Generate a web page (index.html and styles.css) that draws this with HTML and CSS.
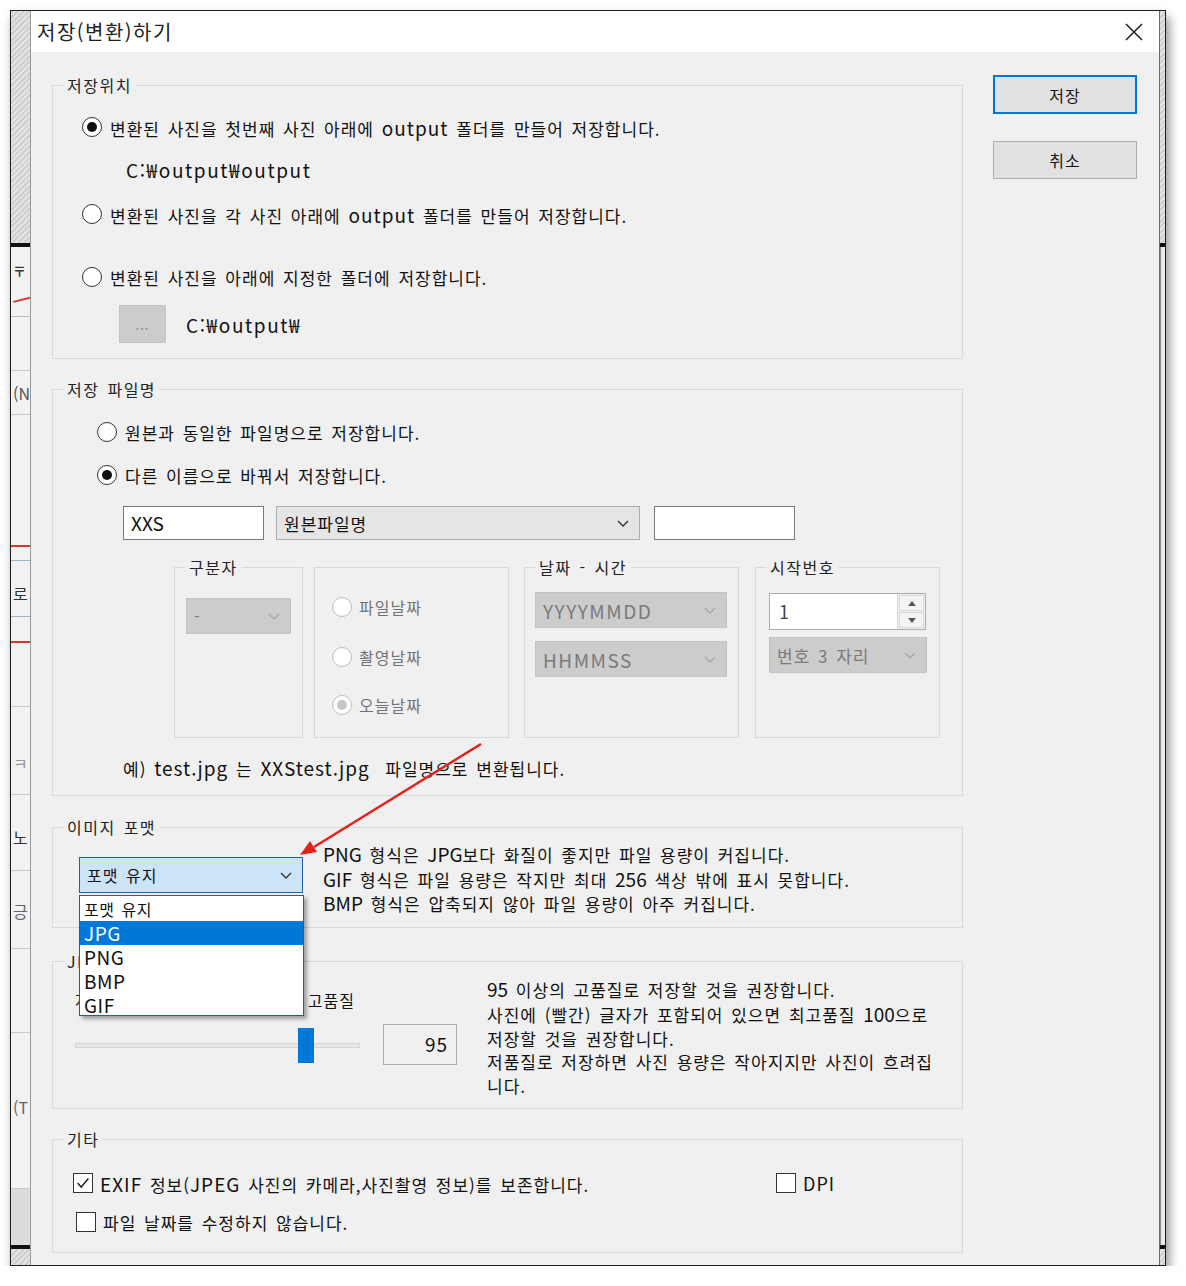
FILE: index.html
```html
<!DOCTYPE html>
<html lang="ko">
<head>
    <meta charset="UTF-8">
    <title>저장(변환)하기</title>
    <link rel="stylesheet" href="styles.css">
</head>
<body>

<div class="screen">
    <!-- window behind the dialog, left edge -->
    <div class="bg-left">
        <div class="hatch bg-top"></div>
        <div class="bg-bar"></div>
        <div class="bg-app">
            <div class="frag f1">〒</div>
            <div class="frag f2"><span class="redslant"></span></div>
            <div class="frag f3"></div>
            <div class="frag f4">(N</div>
            <div class="frag f5"></div>
            <div class="frag f6"></div>
            <div class="frag f7">로</div>
            <div class="frag f8"></div>
            <div class="frag f9"></div>
            <div class="frag f10 faint">ㅋ</div>
            <div class="frag f11">노</div>
            <div class="frag f12">긍</div>
            <div class="frag f13"></div>
            <div class="frag f14">(T</div>
            <div class="frag f15"></div>
        </div>
        <div class="bg-bar"></div>
        <div class="hatch bg-end"></div>
    </div>

    <div class="dialog">
        <div class="titlebar">
            <span class="title">저장(변환)하기</span>
            <svg class="close" width="18" height="18" viewBox="0 0 18 18"><path d="M1 1L17 17M17 1L1 17"/></svg>
        </div>

        <div class="dlg-body">
            <div class="main">

                <fieldset class="grp g-loc">
                    <legend>저장위치</legend>
                    <div class="inner">
                        <div class="row"><span class="radio on"></span><span>변환된 사진을 첫번째 사진 아래에 <span class="lat">output</span> 폴더를 만들어 저장합니다.</span></div>
                        <div class="row path">C:₩output₩output</div>
                        <div class="row r2"><span class="radio"></span><span>변환된 사진을 각 사진 아래에 <span class="lat">output</span> 폴더를 만들어 저장합니다.</span></div>
                        <div class="row r3"><span class="radio"></span><span>변환된 사진을 아래에 지정한 폴더에 저장합니다.</span></div>
                        <div class="row browse">
                            <span class="dots">...</span>
                            <span class="folder">C:₩output₩</span>
                        </div>
                    </div>
                </fieldset>

                <fieldset class="grp g-name">
                    <legend>저장 파일명</legend>
                    <div class="inner">
                        <div class="row"><span class="radio"></span><span>원본과 동일한 파일명으로 저장합니다.</span></div>
                        <div class="row r2"><span class="radio on"></span><span>다른 이름으로 바꿔서 저장합니다.</span></div>
                        <div class="name-row">
                            <span class="textbox">XXS</span>
                            <span class="combo">원본파일명
                                <svg class="chev" viewBox="0 0 12 7"><polyline points="1,1 6,6 11,1"/></svg>
                            </span>
                            <span class="textbox tb2"></span>
                        </div>
                        <div class="subs">
                            <fieldset class="grp sub sub1">
                                <legend>구분자</legend>
                                <div class="sub-inner">
                                    <span class="combo dis sep">-
                                        <svg class="chev" viewBox="0 0 12 7"><polyline points="1,1 6,6 11,1"/></svg>
                                    </span>
                                </div>
                            </fieldset>
                            <fieldset class="grp sub sub2">
                                <div class="sub-inner">
                                    <div class="drow"><span class="radio dis"></span>파일날짜</div>
                                    <div class="drow d2"><span class="radio dis"></span>촬영날짜</div>
                                    <div class="drow d3"><span class="radio dis on"></span>오늘날짜</div>
                                </div>
                            </fieldset>
                            <fieldset class="grp sub sub3">
                                <legend>날짜 - 시간</legend>
                                <div class="sub-inner">
                                    <span class="combo dis wide">YYYYMMDD
                                        <svg class="chev" viewBox="0 0 12 7"><polyline points="1,1 6,6 11,1"/></svg>
                                    </span>
                                    <span class="combo dis wide second">HHMMSS
                                        <svg class="chev" viewBox="0 0 12 7"><polyline points="1,1 6,6 11,1"/></svg>
                                    </span>
                                </div>
                            </fieldset>
                            <fieldset class="grp sub sub4">
                                <legend>시작번호</legend>
                                <div class="sub-inner">
                                    <div class="spin">
                                        <span class="spin-val">1</span>
                                        <span class="spin-btns">
                                            <span class="sb"><svg viewBox="0 0 8 5"><polygon points="0,5 4,0 8,5"/></svg></span>
                                            <span class="sb"><svg viewBox="0 0 8 5"><polygon points="0,0 8,0 4,5"/></svg></span>
                                        </span>
                                    </div>
                                    <span class="combo dis digits">번호 3 자리
                                        <svg class="chev" viewBox="0 0 12 7"><polyline points="1,1 6,6 11,1"/></svg>
                                    </span>
                                </div>
                            </fieldset>
                        </div>
                        <div class="row example"><span>예) <span class="lat">test.jpg</span> 는 <span class="lat">XXStest.jpg</span>  파일명으로 변환됩니다.</span></div>
                    </div>
                </fieldset>

                <fieldset class="grp g-fmt">
                    <legend>이미지 포맷</legend>
                    <div class="inner">
                        <span class="combo fmt">포맷 유지
                            <svg class="chev" viewBox="0 0 12 7"><polyline points="1,1 6,6 11,1"/></svg>
                        </span>
                        <div class="fmt-info">
                            <span class="lat">PNG</span> 형식은 <span class="lat">JPG</span>보다 화질이 좋지만 파일 용량이 커집니다.<br>
                            <span class="lat">GIF</span> 형식은 파일 용량은 작지만 최대 <span class="lat">256</span> 색상 밖에 표시 못합니다.<br>
                            <span class="lat">BMP</span> 형식은 압축되지 않아 파일 용량이 아주 커집니다.
                        </div>
                    </div>
                </fieldset>

                <fieldset class="grp g-jpg">
                    <legend>JPG 품질</legend>
                    <div class="inner">
                        <div class="q-left">
                            <div class="q-labels"><span>저품질</span><span>고품질</span></div>
                            <div class="slider">
                                <div class="track"></div>
                                <span class="thumb"></span>
                            </div>
                        </div>
                        <div class="q-box">95</div>
                        <div class="q-info">
                            <span class="lat">95</span> 이상의 고품질로 저장할 것을 권장합니다.<br>
                            사진에 (빨간) 글자가 포함되어 있으면 최고품질 <span class="lat">100</span>으로<br>
                            저장할 것을 권장합니다.<br>
                            저품질로 저장하면 사진 용량은 작아지지만 사진이 흐려집<br>
                            니다.
                        </div>
                    </div>
                </fieldset>

                <fieldset class="grp g-etc">
                    <legend>기타</legend>
                    <div class="inner">
                        <div class="chk-row">
                            <div class="chk-label exif">
                                <span class="chk"><svg viewBox="0 0 20 20"><polyline points="4,10 8,14.5 16,5"/></svg></span>
                                <span><span class="lat">EXIF</span> 정보(<span class="lat">JPEG</span> 사진의 카메라,사진촬영 정보)를 보존합니다.</span>
                            </div>
                            <div class="chk-label dpi"><span class="chk"></span><span>DPI</span></div>
                        </div>
                        <div class="chk-row second">
                            <div class="chk-label"><span class="chk"></span><span>파일 날짜를 수정하지 않습니다.</span></div>
                        </div>
                    </div>
                </fieldset>

            </div>

            <div class="side">
                <button class="btn btn-default">저장</button>
                <button class="btn btn-cancel">취소</button>
            </div>

            <!-- opened drop-down list of the format combo -->
            <ul class="droplist">
                <li>포맷 유지</li>
                <li class="sel lat">JPG</li>
                <li class="lat">PNG</li>
                <li class="lat">BMP</li>
                <li class="lat">GIF</li>
            </ul>

            <!-- red annotation arrow -->
            <svg class="arrow" width="1128" height="1213" viewBox="0 0 1128 1213">
                <line x1="450" y1="692" x2="283" y2="795"/>
                <polygon points="269,803 286,800 279,789"/>
            </svg>
        </div>
    </div>

    <div class="bg-right">
        <div class="hatch rt-top"></div>
        <div class="bg-bar"></div>
        <div class="rt-mid"></div>
        <div class="bg-bar"></div>
        <div class="hatch rt-end"></div>
    </div>
</div>

</body>
</html>
```

FILE: styles.css
```css
body { margin: 0; background: #fff; font-family: "Noto Sans CJK KR", "Noto Sans", sans-serif; color: #111; letter-spacing: 1px; word-spacing: 2px; }

.screen {
    display: flex; width: 1156px; height: 1256px; margin: 10px 0 0 10px;
    border: 1px solid #1e1e1e; box-sizing: border-box;
    box-shadow: 3px 7px 10px rgba(0,0,0,.45);
}

/* background window pieces */
.hatch { background: repeating-linear-gradient(135deg, #cfcfcf 0 2px, #e4e4e4 2px 4px); }
.bg-left { width: 19px; display: flex; flex-direction: column; overflow: hidden; letter-spacing: 0; }
.bg-top { height: 232px; flex: none; }
.bg-bar { height: 4px; background: #111; flex: none; }
.bg-app { flex: 1; background: #f2f2f2; display: flex; flex-direction: column; overflow: hidden; }
.bg-end { height: 16px; flex: none; }
.frag { flex: none; font-size: 16px; line-height: 20px; color: #333; padding-left: 2px; white-space: nowrap; border-bottom: 1px solid #c9c9c9; box-sizing: border-box; }
.faint { color: #999; }
.f1 { height: 36px; padding-top: 14px; font-size: 13px; font-weight: bold; border: 0; }
.f2 { height: 34px; border-color: #bdbdbd; }
.redslant { display: block; width: 24px; height: 2px; margin-top: 15px; background: #d33; transform: rotate(-14deg); }
.f3 { height: 54px; }
.f4 { height: 44px; padding-top: 12px; color: #555; }
.f5 { height: 132px; border-bottom: 2px solid #d33; }
.f6 { height: 14px; border-color: #9bb3d6; }
.f7 { height: 56px; padding-top: 22px; border-color: #9bb3d6; }
.f8 { height: 26px; border-bottom: 2px solid #d33; }
.f9 { height: 64px; }
.f10 { height: 88px; padding-top: 46px; }
.f11 { height: 76px; padding-top: 32px; }
.f12 { height: 78px; padding-top: 30px; color: #666; }
.f13 { height: 84px; }
.f14 { height: 156px; padding-top: 64px; color: #666; }
.f15 { flex: 1; background: #dcdcdc; border: 0; }

.bg-right { width: 5px; display: flex; flex-direction: column; }
.rt-top { height: 232px; }
.rt-mid { flex: 1; background: #e9e9e9; border-left: 1px solid #888; }
.rt-end { height: 16px; }

/* dialog */
.dialog {
    width: 1130px; flex: none; box-sizing: border-box; background: #f0f0f0;
    border-left: 1px solid #9a9a9a; border-right: 1px solid #6a6a6a;
    display: flex; flex-direction: column;
}
.titlebar { height: 41px; flex: none; background: #fff; display: flex; align-items: center; justify-content: space-between; padding: 0 16px 0 6px; }
.title { font-size: 20px; color: #222; letter-spacing: 1.5px; }
.close path { stroke: #222; stroke-width: 1.6; fill: none; }

.dlg-body { position: relative; flex: 1; display: flex; padding: 23px 0 0 21px; }
.main { width: 911px; flex: none; }
.side { margin-left: 30px; width: 144px; display: flex; flex-direction: column; }

.lat { font-size: 19px; }

.grp { border: 1px solid #d9d9d9; margin: 0; padding: 0; min-width: 0; }
.grp legend { margin-left: 10px; padding: 0 4px; font-size: 16px; line-height: 20px; height: 20px; color: #222; letter-spacing: 1.5px; }
.g-name { margin-top: 20px; }
.g-fmt { margin-top: 21px; }
.g-jpg { margin-top: 23px; }
.g-etc { margin-top: 20px; }

.row { display: flex; align-items: center; height: 34px; font-size: 17px; white-space: pre; }
.row .lat { font-size: 19px; }

.radio { position: relative; flex: none; width: 20px; height: 20px; margin-right: 8px; border: 1px solid #333; border-radius: 50%; background: #fff; box-sizing: border-box; }
.radio.on::after { content: ""; position: absolute; inset: 4px; border-radius: 50%; background: #111; }
.radio.dis { border-color: #bcbcbc; }
.radio.dis.on::after { background: #c6c6c6; }

/* 저장위치 */
.g-loc .inner { padding: 15px 0 15px 29px; }
.g-loc .path { margin-top: 8px; padding-left: 44px; font-size: 19px; letter-spacing: 1.6px; }
.g-loc .r2 { margin-top: 11px; }
.g-loc .r3 { margin-top: 29px; }
.browse { margin-top: 11px; height: 38px; }
.dots { width: 47px; height: 38px; margin-left: 37px; box-sizing: border-box; background: #cccccc; border: 1px solid #c4c4c4; color: #888; font-size: 13px; display: flex; align-items: center; justify-content: center; }
.folder { margin-left: 20px; font-size: 19px; letter-spacing: 1.6px; }

/* 저장 파일명 */
.g-name .inner { padding: 16px 0 13px 44px; }
.g-name .r2 { margin-top: 9px; }
.name-row { display: flex; margin: 14px 0 0 26px; }
.textbox { width: 141px; height: 34px; box-sizing: border-box; background: #fff; border: 1px solid #7a7a7a; padding-left: 7px; font-size: 19px; line-height: 32px; letter-spacing: 0; }
.tb2 { margin-left: 14px; }
.combo { position: relative; display: flex; align-items: center; box-sizing: border-box; height: 34px; padding-left: 7px; background: #e5e5e5; border: 1px solid #adadad; font-size: 17px; }
.name-row .combo { width: 364px; margin-left: 12px; }
.chev { position: absolute; right: 10px; top: 50%; width: 12px; height: 7px; margin-top: -3px; }
.chev polyline { fill: none; stroke: #333; stroke-width: 1.4; }
.combo.dis { background: #cccccc; border-color: #c4c4c4; color: #7a7a7a; height: 36px; }
.combo.dis .chev polyline { stroke: #a8a8a8; }

.subs { display: flex; align-items: flex-start; margin: 17px 0 0 77px; }
.sub { height: 181px; box-sizing: border-box; }
.sub1 { width: 129px; }
.sub2 { width: 195px; height: 171px; margin: 10px 0 0 11px; }
.sub3 { width: 215px; margin-left: 15px; }
.sub4 { width: 185px; margin-left: 16px; }
.sub1 .sub-inner { padding: 21px 0 0 11px; }
.sep { width: 105px; font-size: 16px; }
.sub2 .sub-inner { padding: 24px 0 0 17px; }
.drow { display: flex; align-items: center; height: 30px; font-size: 16px; color: #727272; }
.drow .radio { margin-right: 7px; }
.d2 { margin-top: 20px; }
.d3 { margin-top: 18px; }
.sub3 .sub-inner { padding: 15px 0 0 10px; }
.wide { width: 192px; font-size: 19px; letter-spacing: 1.5px; }
.wide.second { margin-top: 13px; }
.sub4 .sub-inner { padding: 16px 0 0 13px; }
.spin { display: flex; width: 157px; height: 37px; box-sizing: border-box; background: #fff; border: 1px solid #adadad; }
.spin-val { flex: 1; padding-left: 9px; font-size: 18px; line-height: 35px; color: #444; }
.spin-btns { width: 28px; display: flex; flex-direction: column; background: #f0f0f0; border-left: 1px solid #d6d6d6; padding: 1px; box-sizing: border-box; gap: 1px; }
.sb { flex: 1; display: flex; align-items: center; justify-content: center; background: #f4f4f4; border: 1px solid #dadada; }
.sb svg { width: 8px; height: 5px; fill: #555; }
.digits { width: 158px; margin-top: 7px; font-size: 17px; }

.example { margin: 14px 0 0 26px; height: 30px; }

/* 이미지 포맷 */
.g-fmt .inner { display: flex; align-items: flex-start; height: 90px; padding-left: 26px; }
.fmt { width: 224px; height: 36px; margin-top: 20px; flex: none; background: #cce4f7; border-color: #1e5fa5; font-size: 16px; }
.fmt-info { margin: 5px 0 0 20px; font-size: 17px; line-height: 23.5px; white-space: nowrap; }
.fmt-info .lat { font-size: 19px; letter-spacing: 0; }

/* JPG 품질 */
.g-jpg .inner { display: flex; align-items: flex-start; height: 137px; padding-left: 22px; }
.q-left { width: 285px; flex: none; }
.q-labels { display: flex; justify-content: space-between; height: 24px; margin-top: 17px; padding-right: 5px; font-size: 16px; line-height: 24px; }
.slider { position: relative; height: 35px; margin-top: 16px; padding-top: 15px; box-sizing: border-box; }
.track { height: 5px; box-sizing: border-box; background: #e7e7e7; border: 1px solid #d6d6d6; }
.thumb { position: absolute; left: 223px; top: 0; width: 16px; height: 35px; background: #0078d7; }
.q-box { width: 74px; height: 41px; margin: 53px 0 0 23px; flex: none; box-sizing: border-box; border: 1px solid #adadad; text-align: right; padding-right: 8px; font-size: 19px; line-height: 38px; }
.q-info { margin: 6px 0 0 30px; font-size: 17px; line-height: 23.75px; white-space: nowrap; }
.q-info .lat { font-size: 19px; letter-spacing: 0; }

/* 기타 */
.g-etc .inner { padding: 21px 0 17px 20px; }
.chk-row { display: flex; align-items: center; height: 26px; font-size: 17px; white-space: nowrap; }
.chk-row .lat { font-size: 19px; }
.chk-row.second { margin: 13px 0 0 3px; }
.chk-label { display: flex; align-items: center; }
.exif { width: 703px; flex: none; }
.chk { width: 20px; height: 20px; flex: none; margin-right: 7px; box-sizing: border-box; border: 1px solid #333; background: #fff; }
.chk svg { display: block; width: 18px; height: 18px; }
.chk polyline { fill: none; stroke: #222; stroke-width: 1.6; }
.dpi { font-size: 18px; }

/* buttons */
.btn { width: 144px; height: 39px; box-sizing: border-box; background: #e1e1e1; border: 1px solid #adadad; font-family: inherit; font-size: 16px; letter-spacing: 1px; color: #111; padding: 0; }
.btn-default { border: 2px solid #0078d7; }
.btn-cancel { height: 38px; margin-top: 27px; }

/* overlays */
.droplist {
    position: absolute; left: 48px; top: 843px; width: 225px; height: 121px;
    margin: 0; padding: 1px 0 0; list-style: none; box-sizing: border-box;
    background: #fff; border: 1px solid #1e5fa5; box-shadow: 3px 3px 4px rgba(0,0,0,.35);
    letter-spacing: 0.5px;
}
.droplist li { height: 24px; line-height: 24px; padding-left: 4px; font-size: 16px; }
.droplist li.lat { font-size: 19px; }
.droplist li.sel { background: #0078d7; color: #fff; }

.arrow { position: absolute; left: 0; top: 0; pointer-events: none; }
.arrow line { stroke: #e2231a; stroke-width: 2.5; }
.arrow polygon { fill: #e2231a; }
```
